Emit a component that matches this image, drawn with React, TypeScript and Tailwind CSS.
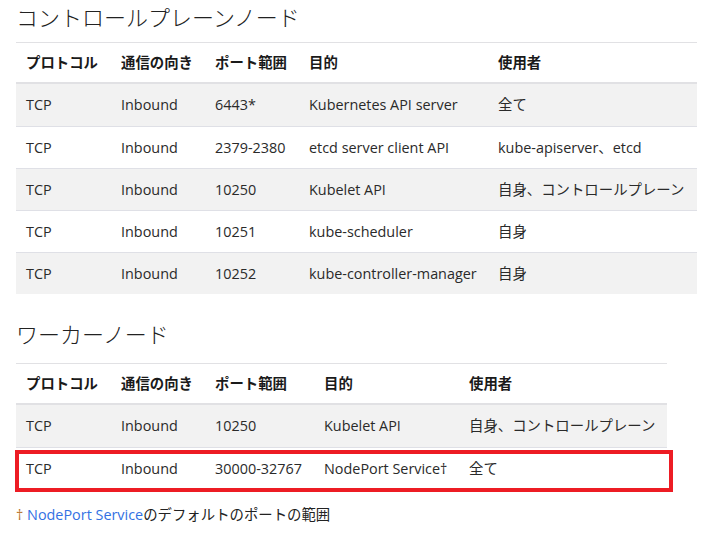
const font = "font-['Open_Sans','Noto_Sans_CJK_JP',sans-serif]";

interface Row {
    protocol: string;
    direction: string;
    ports: string;
    purpose: string;
    usedBy: string;
}

const header = ["プロトコル", "通信の向き", "ポート範囲", "目的", "使用者"];

const controlPlane: Row[] = [
    { protocol: "TCP", direction: "Inbound", ports: "6443*", purpose: "Kubernetes API server", usedBy: "全て" },
    { protocol: "TCP", direction: "Inbound", ports: "2379-2380", purpose: "etcd server client API", usedBy: "kube-apiserver、etcd" },
    { protocol: "TCP", direction: "Inbound", ports: "10250", purpose: "Kubelet API", usedBy: "自身、コントロールプレーン" },
    { protocol: "TCP", direction: "Inbound", ports: "10251", purpose: "kube-scheduler", usedBy: "自身" },
    { protocol: "TCP", direction: "Inbound", ports: "10252", purpose: "kube-controller-manager", usedBy: "自身" },
];

const worker: Row[] = [
    { protocol: "TCP", direction: "Inbound", ports: "10250", purpose: "Kubelet API", usedBy: "自身、コントロールプレーン" },
    { protocol: "TCP", direction: "Inbound", ports: "30000-32767", purpose: "NodePort Service†", usedBy: "全て" },
];

function PortTable({ rows, widths, className, highlightLast }: { rows: Row[]; widths: string[]; className: string; highlightLast?: boolean }) {
    return (
        <div className={`relative ${className}`}>
            <div className="flex h-[42px] items-center border-t border-b-2 border-[#e1e1e4] font-bold text-[14.4px] text-[#1a1a1a]">
                {header.map((h, i) => (
                    <div key={i} className={`${widths[i]} pl-[10px] whitespace-nowrap`}>{h}</div>
                ))}
            </div>
            {rows.map((r, idx) => (
                <div
                    key={idx}
                    className={`flex h-[42px] items-center border-t border-[#dfe0e6] text-[14.4px] text-[#2a2a2a] ${idx % 2 === 0 ? "bg-[#f2f2f2]" : "bg-white"} ${idx === 0 ? "border-t-0" : ""}`}
                >
                    {[r.protocol, r.direction, r.ports, r.purpose, r.usedBy].map((v, i) => (
                        <div key={i} className={`${widths[i]} pl-[10px] whitespace-nowrap`}>{v}</div>
                    ))}
                </div>
            ))}
            {highlightLast && (
                <div className="absolute left-[-1px] bottom-[-3px] w-[658px] h-[42px] border-4 border-[#ed1c24] pointer-events-none" />
            )}
        </div>
    );
}

export default function App() {
    return (
        <div className={`${font} bg-white w-[713px] h-[533px] pl-[16px] overflow-hidden`}>
            <h2 className="text-[22px] font-light leading-[34px] text-[#222]">コントロールプレーンノード</h2>
            <PortTable
                rows={controlPlane}
                className="mt-[8px] w-[681px]"
                widths={["w-[95px]", "w-[94px]", "w-[94px]", "w-[189px]", "flex-1"]}
            />
            <h2 className="mt-[23px] text-[22px] font-light leading-[34px] text-[#222]">ワーカーノード</h2>
            <PortTable
                rows={worker}
                className="mt-[12px] w-[651px]"
                widths={["w-[95px]", "w-[94px]", "w-[109px]", "w-[145px]", "flex-1"]}
                highlightLast
            />
            <p className="mt-[14px] text-[14.4px] leading-[24px] text-[#222]">
                <span className="text-[#b8742c]">†</span>{" "}
                <a href="#" className="text-[#3371e3]">NodePort Service</a>のデフォルトのポートの範囲
            </p>
        </div>
    );
}
